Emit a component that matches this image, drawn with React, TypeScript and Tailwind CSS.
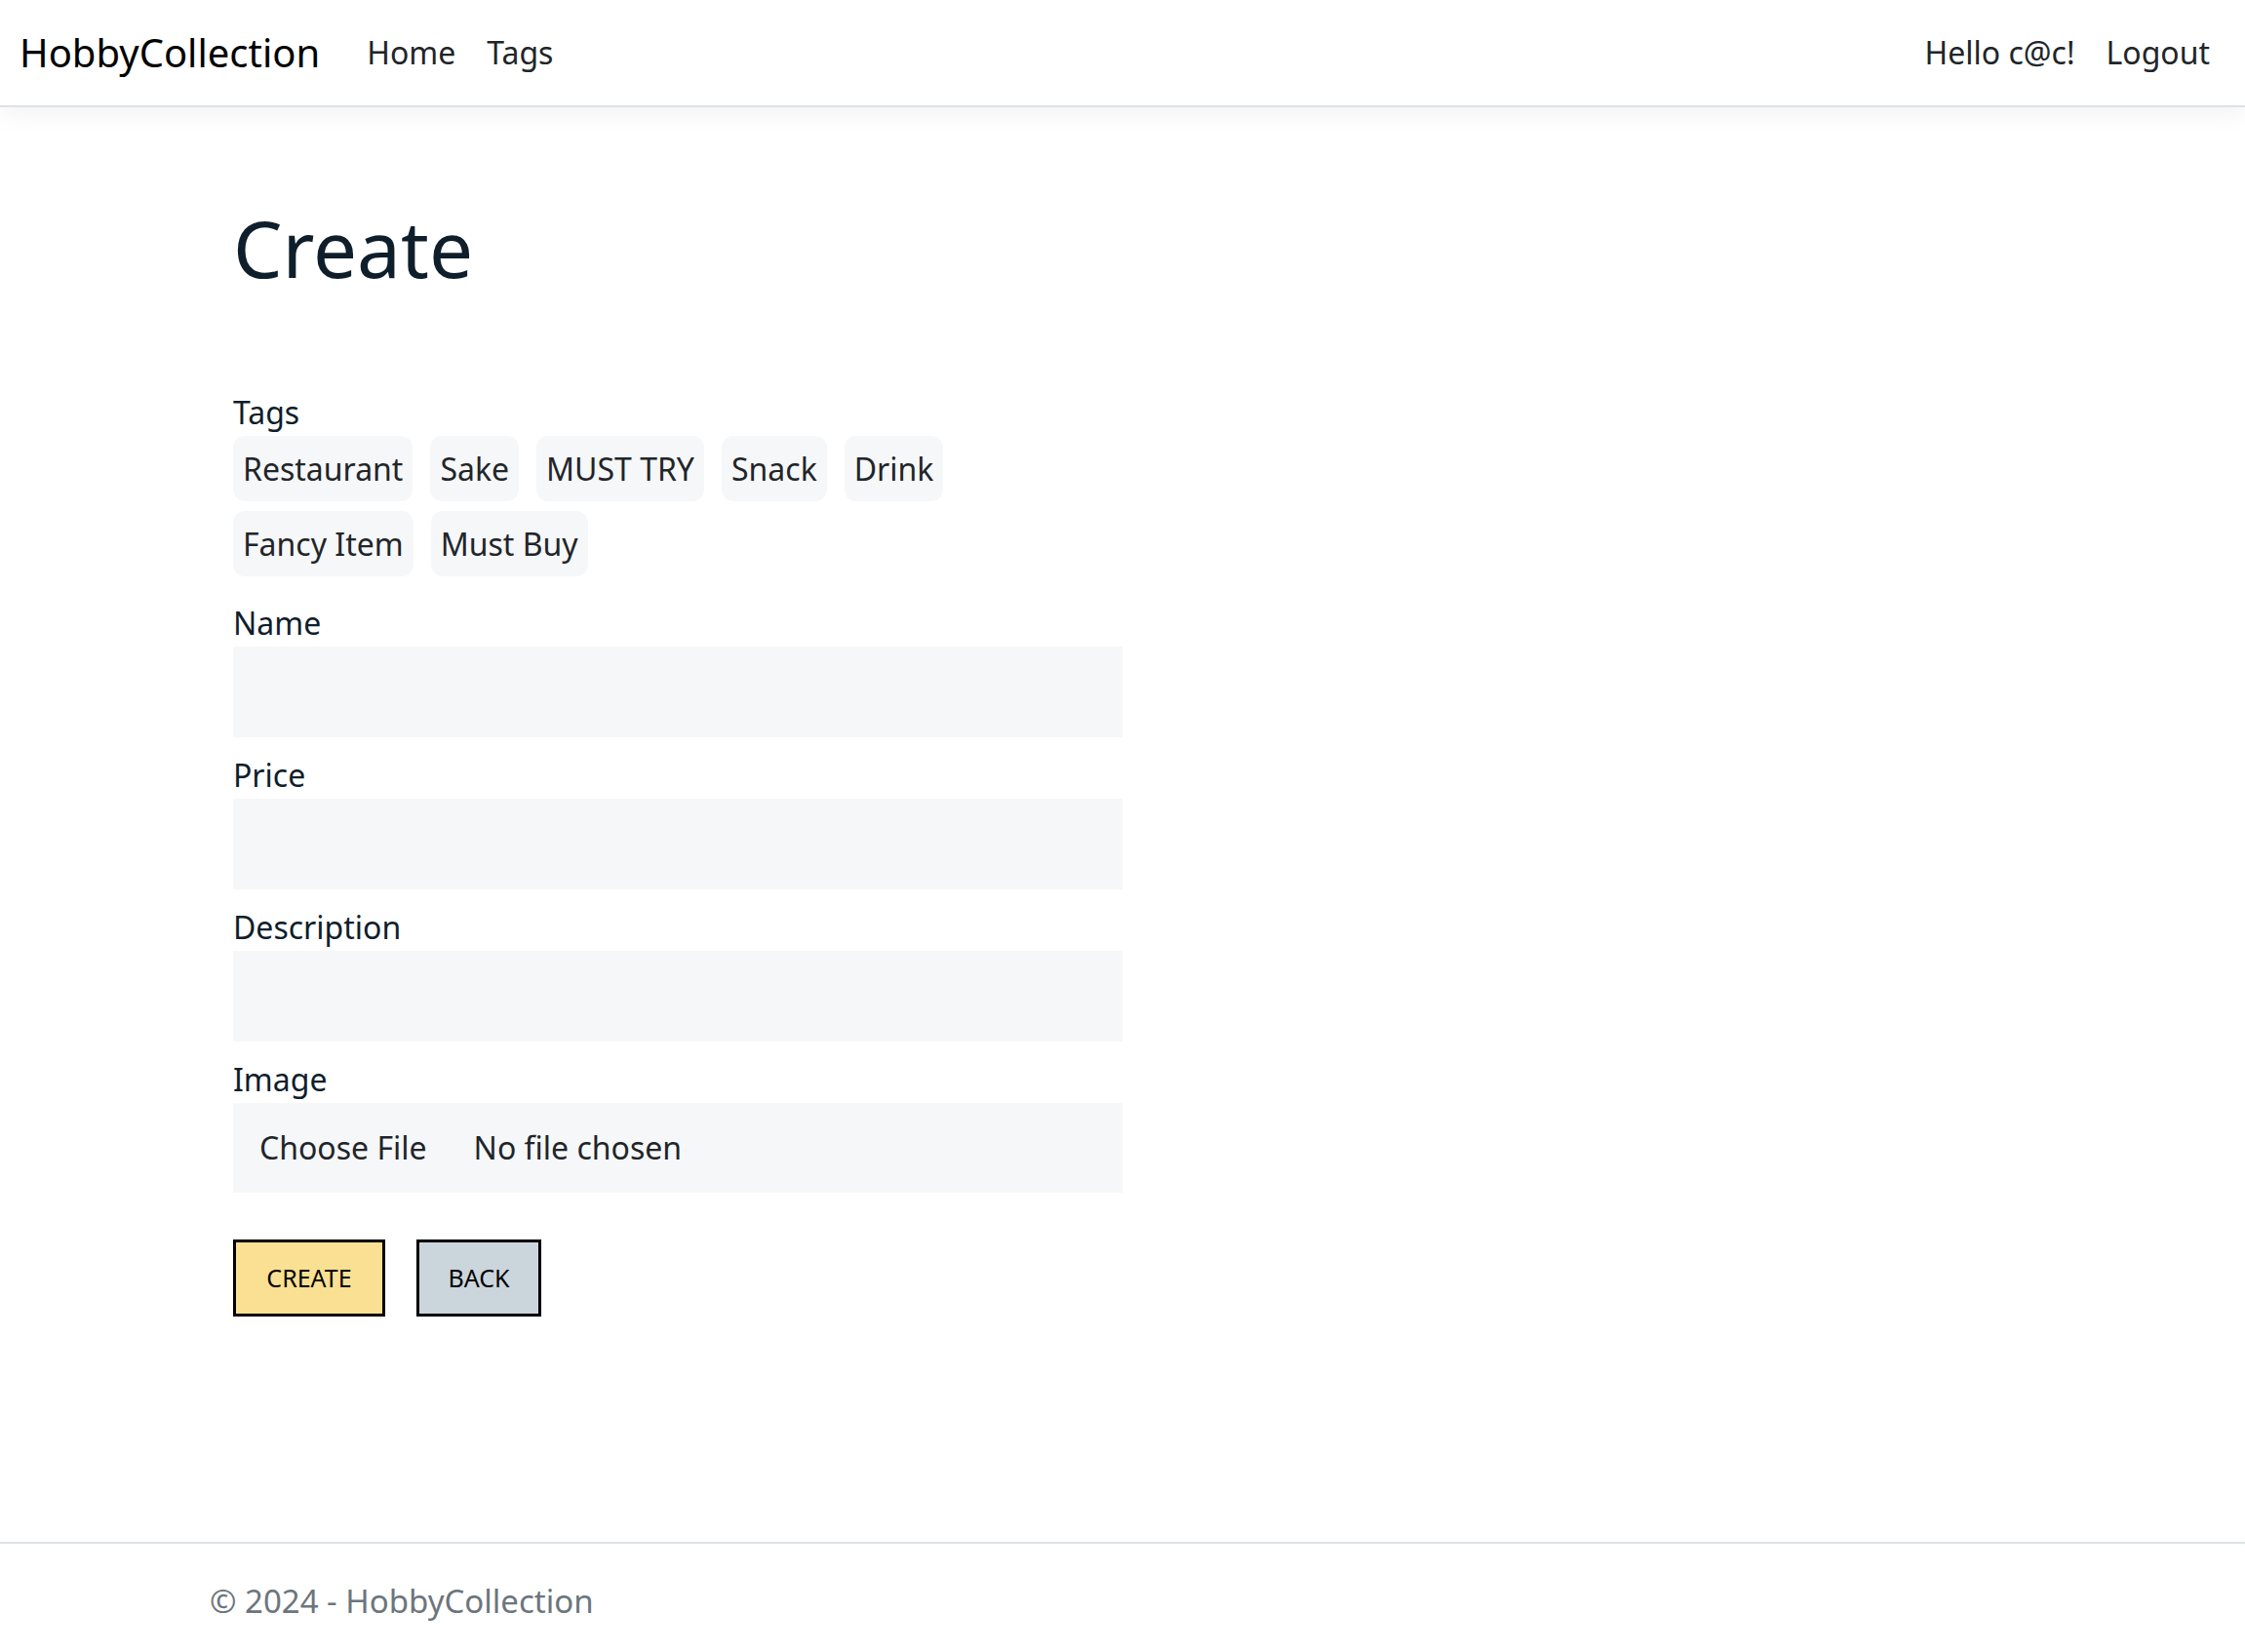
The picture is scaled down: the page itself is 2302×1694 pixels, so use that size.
import React from 'react';

const tags = ['Restaurant', 'Sake', 'MUST TRY', 'Snack', 'Drink', 'Fancy Item', 'Must Buy'];

const Field: React.FC<{ label: string }> = ({ label }) => (
  <div className="flex flex-col">
    <label className="text-[32px] leading-[48px] text-[#0f1e2b]">{label}</label>
    <div className="h-[93px] w-full bg-[#f6f7f9]" />
  </div>
);

const App: React.FC = () => {
  return (
    <div
      className="flex h-[1701px] flex-col bg-white text-[#212529]"
      style={{ fontFamily: '"Noto Sans", "Liberation Sans", sans-serif' }}
    >
      <nav className="relative z-10 flex h-[110px] shrink-0 items-center justify-between border-b-2 border-[#dee2e6] bg-white px-[20px] shadow-[0_8px_24px_rgba(0,0,0,0.05)]">
        <div className="flex items-center">
          <a className="mr-[32px] text-[40px] text-black">HobbyCollection</a>
          <a className="px-[16px] text-[32px] text-[#212529]">Home</a>
          <a className="px-[16px] text-[32px] text-[#212529]">Tags</a>
        </div>
        <div className="flex items-center">
          <span className="px-[16px] text-[32px] text-[#212529]">Hello c@c!</span>
          <a className="px-[16px] text-[32px] text-[#212529]">Logout</a>
        </div>
      </nav>

      <main className="flex-1">
        <div className="mx-auto w-[1920px] px-[24px]">
          <div className="w-[960px] px-[24px]">
            <h1 className="mt-[96px] text-[80px] leading-[96px] text-[#0f1e2b]">Create</h1>

            <div className="mt-[99px] flex flex-col">
              <label className="text-[32px] leading-[44px] text-[#0f1e2b]">Tags</label>
              <div className="mt-[2px] flex flex-wrap gap-x-[18px] gap-y-[10px]">
                {tags.map((t) => (
                  <span
                    key={t}
                    className="flex h-[67px] items-center rounded-[12px] bg-[#f6f7f9] px-[10px] text-[32px] text-[#212529]"
                  >
                    {t}
                  </span>
                ))}
              </div>
            </div>

            <div className="mt-[24px] flex flex-col gap-[15px]">
              <Field label="Name" />
              <Field label="Price" />
              <Field label="Description" />
              <div className="flex flex-col">
                <label className="text-[32px] leading-[48px] text-[#0f1e2b]">Image</label>
                <div className="flex h-[92px] w-full items-center bg-[#f6f7f9] px-[27px] text-[32px] text-[#212529]">
                  <span>Choose File</span>
                  <span className="ml-[48px]">No file chosen</span>
                </div>
              </div>
            </div>

            <div className="mt-[48px] flex gap-[32px]">
              <button className="h-[79px] w-[156px] border-[3px] border-black bg-[#fae092] text-[25px] text-black">
                CREATE
              </button>
              <button className="h-[79px] w-[128px] border-[3px] border-black bg-[#cbd5dc] text-[25px] text-black">
                BACK
              </button>
            </div>
          </div>
        </div>
      </main>

      <footer className="h-[120px] shrink-0 border-t-2 border-[#dee2e6]">
        <div className="mx-auto w-[1920px] px-[24px] text-[33px] leading-[118px] text-[#6c757d]">
          © 2024 - HobbyCollection
        </div>
      </footer>
    </div>
  );
};

export default App;
